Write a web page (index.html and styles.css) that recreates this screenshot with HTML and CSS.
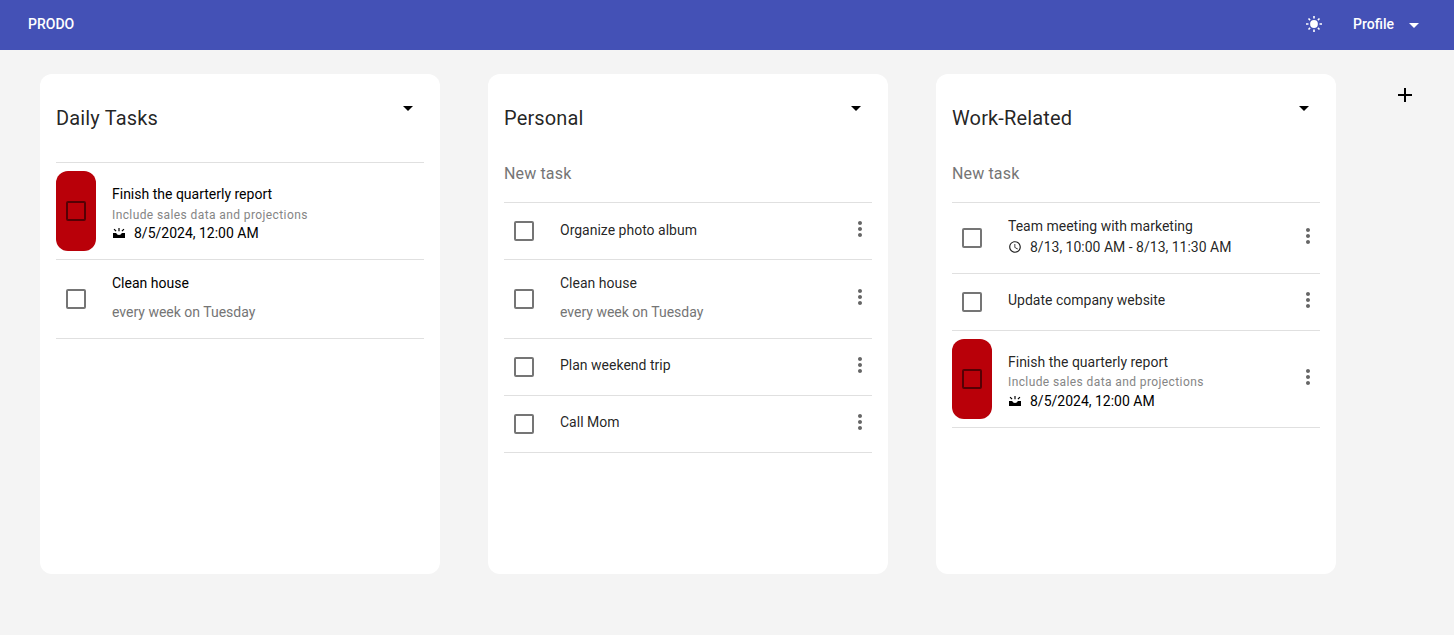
FILE: index.html
```html
<!DOCTYPE html>
<html lang="en">
<head>
<meta charset="utf-8">
<title>Prodo</title>
<link rel="stylesheet" href="styles.css">
</head>
<body>
<svg class="defs" width="0" height="0">
  <symbol id="caret" viewBox="0 0 10 5"><path d="M0 0h10L5 5z"/></symbol>
  <symbol id="dots" viewBox="0 0 24 24"><path d="M12 8c1.1 0 2-.9 2-2s-.9-2-2-2-2 .9-2 2 .9 2 2 2zm0 2c-1.1 0-2 .9-2 2s.9 2 2 2 2-.9 2-2-.9-2-2-2zm0 6c-1.1 0-2 .9-2 2s.9 2 2 2 2-.9 2-2-.9-2-2-2z"/></symbol>
  <symbol id="clock" viewBox="0 0 24 24"><path d="M11.99 2C6.47 2 2 6.48 2 12s4.47 10 9.99 10C17.52 22 22 17.52 22 12S17.52 2 11.99 2zM12 20c-4.42 0-8-3.58-8-8s3.58-8 8-8 8 3.58 8 8-3.58 8-8 8zm.5-13H11v6l5.25 3.15.75-1.23-4.5-2.67z"/></symbol>
  <symbol id="due" viewBox="0 0 14 14"><path d="M1 7h3.200c.5 1.300 1.500 2 2.800 2s2.300-.7 2.800-2H13v5H1z"/><path d="M6.400 2h1.200v3.200H6.400zM1.600 3.600l.9-.9 2 2-.9.9zM12.400 3.600l-.9-.9-2 2 .9.9z"/></symbol>
</svg>
<header class="bar">
  <a class="brand">PRODO</a>
  <nav class="actions">
    <svg class="sun" viewBox="0 0 16 16"><circle cx="8" cy="8" r="3.900"/><path d="M8 0v2.500M8 13.500V16M0 8h2.500M13.500 8H16M2.500 2.500l1.600 1.600M11.900 11.900l1.600 1.600M2.500 13.500l1.600-1.600M11.900 4.100l1.600-1.600"/></svg>
    <span class="profile">Profile</span>
    <svg class="caret"><use href="#caret"/></svg>
  </nav>
</header>
<main class="board">
  <section class="card">
    <div class="head"><h2>Daily Tasks</h2><svg class="caret"><use href="#caret"/></svg></div>
    <ul class="list">
      <li class="task report"><span class="check overdue"><i></i></span><div class="body"><p>Finish the quarterly report</p><p class="note">Include sales data and projections</p><p class="when"><svg><use href="#due"/></svg>8/5/2024, 12:00 AM</p></div></li>
      <li class="task repeat"><span class="check"><i></i></span><div class="body"><p>Clean house</p><p class="rule">every week on Tuesday</p></div></li>
    </ul>
  </section>
  <section class="card soft">
    <div class="head"><h2>Personal</h2><svg class="caret"><use href="#caret"/></svg></div>
    <div class="new">New task</div>
    <ul class="list">
      <li class="task"><span class="check"><i></i></span><div class="body"><p>Organize photo album</p></div><svg class="more"><use href="#dots"/></svg></li>
      <li class="task repeat"><span class="check"><i></i></span><div class="body"><p>Clean house</p><p class="rule">every week on Tuesday</p></div><svg class="more"><use href="#dots"/></svg></li>
      <li class="task"><span class="check"><i></i></span><div class="body"><p>Plan weekend trip</p></div><svg class="more"><use href="#dots"/></svg></li>
      <li class="task"><span class="check"><i></i></span><div class="body"><p>Call Mom</p></div><svg class="more"><use href="#dots"/></svg></li>
    </ul>
  </section>
  <section class="card soft">
    <div class="head"><h2>Work-Related</h2><svg class="caret"><use href="#caret"/></svg></div>
    <div class="new">New task</div>
    <ul class="list">
      <li class="task event"><span class="check"><i></i></span><div class="body"><p>Team meeting with marketing</p><p class="when"><svg><use href="#clock"/></svg>8/13, 10:00 AM - 8/13, 11:30 AM</p></div><svg class="more"><use href="#dots"/></svg></li>
      <li class="task"><span class="check"><i></i></span><div class="body"><p>Update company website</p></div><svg class="more"><use href="#dots"/></svg></li>
      <li class="task report"><span class="check overdue"><i></i></span><div class="body"><p>Finish the quarterly report</p><p class="note">Include sales data and projections</p><p class="when"><svg><use href="#due"/></svg>8/5/2024, 12:00 AM</p></div><svg class="more"><use href="#dots"/></svg></li>
    </ul>
  </section>
  <svg class="add" viewBox="0 0 14 14"><path d="M7 0v14M0 7h14"/></svg>
</main>
</body>
</html>
```
FILE: styles.css
```css
* { box-sizing: border-box; }
body { margin: 0; min-height: 100vh; background: #f4f4f4; color: #000; font: 14px/20px Roboto, "Liberation Sans", sans-serif; overflow: hidden; }
h2, p, ul { margin: 0; padding: 0; font-weight: 400; }
svg { flex: none; }
.defs { display: block; position: absolute; }
.bar { display: flex; justify-content: space-between; align-items: center; height: 50px; padding: 0 35px 2px 28px; background: #4451b6; color: #fff; font-weight: 500; }
.actions { display: flex; align-items: center; }
.sun { width: 16px; height: 16px; margin: 0 31px 0 0; fill: #fff; stroke: #fff; stroke-width: 1.6; }
.sun circle { stroke: none; }
.profile { margin-right: 15px; }
.caret { width: 10px; height: 5px; fill: currentColor; }
.bar .caret { margin-top: 3px; }
.board { display: flex; align-items: flex-start; gap: 48px; padding: 24px 40px; }
.card { flex: none; width: 400px; height: 500px; padding: 0 16px; border-radius: 12px; background: #fff; }
.head { display: flex; justify-content: space-between; height: 88px; padding: 28px 11px 0 0; }
h2 { font-size: 20px; line-height: 32px; letter-spacing: .15px; color: rgba(0,0,0,.87); }
.head .caret { margin-top: 4px; }
.new { height: 40px; font-size: 16px; line-height: 23px; letter-spacing: .15px; color: #757575; }
.list { list-style: none; border-top: 1px solid #e0e0e0; }
.task { display: flex; align-items: center; height: 57px; padding-right: 4px; border-bottom: 1px solid #e0e0e0; }
.task.report { height: 97px; }
.task.repeat { height: 79px; }
.task.event { height: 71px; }
.check { display: grid; place-items: center; width: 40px; height: 40px; margin-right: 16px; }
.check i { width: 20px; height: 20px; border: 2px solid #757575; border-radius: 2px; }
.overdue { height: 80px; border-radius: 12px; background: #b90009; }
.overdue i { border-color: #550004; }
.body { flex: 1; padding-bottom: 4px; }
.task:first-child .body { padding-bottom: 2px; }
.soft .body { color: rgba(0,0,0,.87); }
.task.report .body { padding: 4px 0 0; }
.report .body p { line-height: 20px; }
.report .body .note { margin-bottom: -1px; padding-top: 1px; font-size: 12px; letter-spacing: .4px; color: #858585; }
.soft .report .body .note { margin-bottom: 0; padding-top: 0; }
.report .body .when { line-height: 18px; color: #000; }
.rule { margin-top: 9px; color: #757575; }
.task.repeat .body { padding-bottom: 3px; }
.task.event .body { padding-bottom: 4px; }
.event .when { margin-top: 1px; }
.when { display: flex; align-items: center; }
.when svg { width: 14px; height: 14px; margin-right: 8px; fill: currentColor; }
.more { width: 24px; height: 24px; margin: 0 -4px 4px 0; fill: #666; }
.add { width: 14px; height: 14px; margin: 14px 0 0 14px; stroke: #000; stroke-width: 2; }
```
